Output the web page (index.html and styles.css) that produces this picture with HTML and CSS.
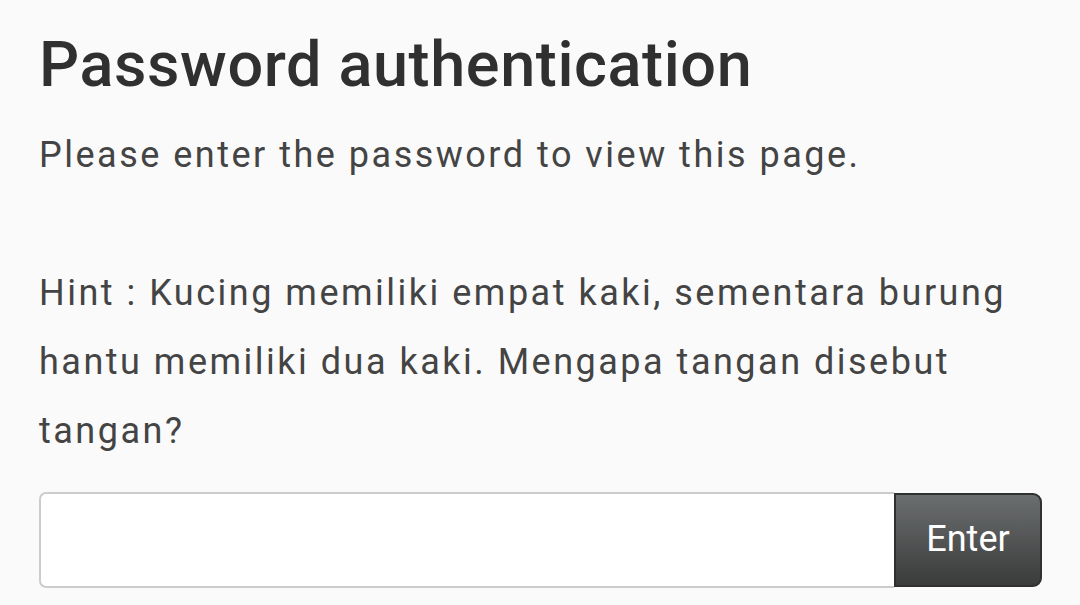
FILE: index.html
```html
<!DOCTYPE html>
<html lang="en">
<head>
    <meta charset="UTF-8">
    <meta name="viewport" content="width=device-width, initial-scale=1.0">
    <title>Password authentication</title>
    <link rel="stylesheet" href="styles.css">
</head>
<body>
    <div class="auth">
        <h1 class="auth-title">Password authentication</h1>
        <p class="auth-text">Please enter the password to view this page.</p>
        <p class="auth-hint">Hint : Kucing memiliki empat kaki, sementara burung hantu memiliki dua kaki. Mengapa tangan disebut tangan?</p>
        <form class="auth-form" onsubmit="return false;">
            <input class="auth-input" type="password" name="password">
            <button class="auth-button" type="submit">Enter</button>
        </form>
    </div>
</body>
</html>
```

FILE: styles.css
```css
body {
    margin: 0;
    padding: 0;
    font-family: Roboto, 'Noto Sans', sans-serif;
    background: #fafafa;
    color: #444;
}

.auth {
    padding: 21px 39px 0 39px;
    width: 1003px;
}

.auth-title {
    margin: 0;
    font-size: 63px;
    font-weight: 500;
    letter-spacing: 0.6px;
    line-height: 88px;
    color: #303030;
}

.auth-text {
    margin: 12px 0 0 0;
    font-size: 36px;
    letter-spacing: 2.5px;
    line-height: 69px;
}

.auth-hint {
    margin: 69px 0 0 0;
    font-size: 36px;
    letter-spacing: 2.5px;
    line-height: 69px;
}

.auth-form {
    display: flex;
    margin-top: 26px;
}

.auth-input {
    flex: 1;
    height: 96px;
    box-sizing: border-box;
    border: 2px solid #cccccc;
    border-right: none;
    border-radius: 7px 0 0 7px;
    background: #fff;
    margin: 0;
    font-size: 36px;
}

.auth-button {
    width: 148px;
    height: 94px;
    margin: 1px 0 0 0;
    padding: 0 0 2px 0;
    box-sizing: border-box;
    border: 2px solid #2f3030;
    border-radius: 0 9px 9px 0;
    background: linear-gradient(to bottom, #6b6e6f, #3a3b3b);
    color: #fff;
    font-family: Roboto, 'Noto Sans', sans-serif;
    font-size: 36px;
    letter-spacing: 0;
}
```
